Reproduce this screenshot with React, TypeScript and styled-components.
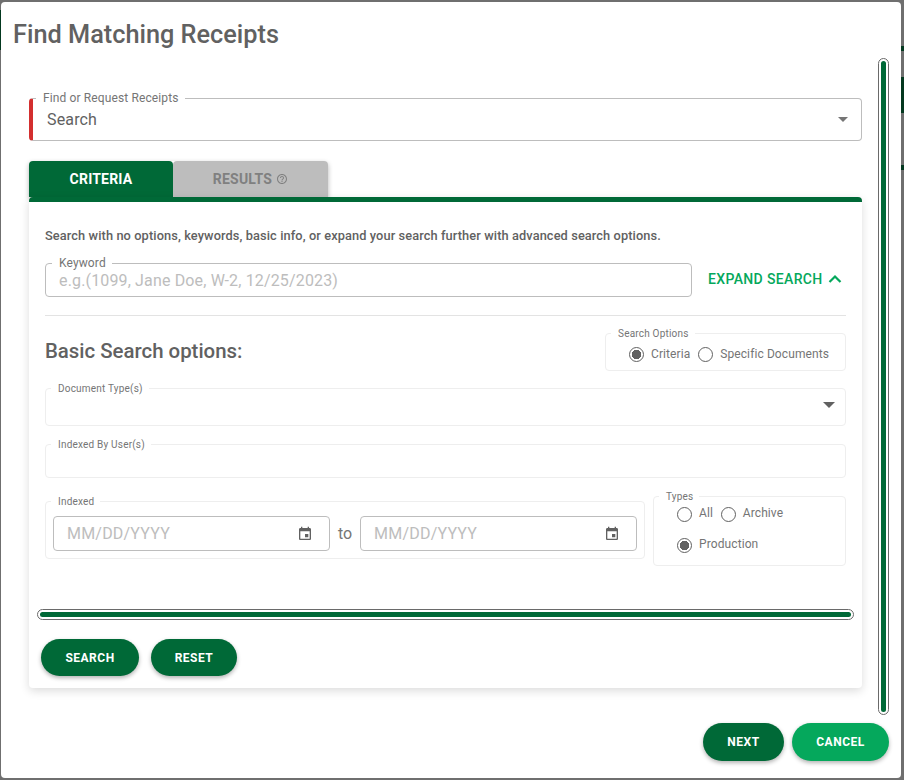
import React from 'react';
import styled, {createGlobalStyle} from 'styled-components';

const GlobalStyle = createGlobalStyle`
    html, body {
        margin: 0;
        padding: 0;
        background: #6f6f6f;
    }
    * {
        box-sizing: border-box;
    }
    body {
        font-family: Roboto, "Liberation Sans", sans-serif;
        color: #616161;
    }
`;

const CalendarIcon = () => (
    <svg width="16" height="16" viewBox="0 0 24 24" fill="#616161">
        <path d="M17 12h-5v5h5v-5zM16 1v2H8V1H6v2H5c-1.11 0-1.99.9-1.99 2L3 19c0 1.1.89 2 2 2h14c1.1 0 2-.9 2-2V5c0-1.1-.9-2-2-2h-1V1h-2zm3 18H5V8h14v11z" />
    </svg>
);

const HelpIcon = () => (
    <svg width="12" height="12" viewBox="0 0 24 24" fill="#808080">
        <path d="M11 18h2v-2h-2v2zm1-16C6.48 2 2 6.48 2 12s4.48 10 10 10 10-4.48 10-10S17.52 2 12 2zm0 18c-4.41 0-8-3.59-8-8s3.59-8 8-8 8 3.59 8 8-3.59 8-8 8zm0-14c-2.21 0-4 1.79-4 4h2c0-1.1.9-2 2-2s2 .9 2 2c0 2-3 1.75-3 5h2c0-2.25 3-2.5 3-5 0-2.21-1.79-4-4-4z" />
    </svg>
);

const App: React.FC = () => {
    return (
        <>
            <GlobalStyle />
            <Page>
                <BackdropMark $top={10} $height={40} />
                <BackdropMark $right $top={46} $height={5} />
                <BackdropMark $right $top={77} $height={36} />
                <BackdropMark $right $top={165} $height={5} />
                <Dialog>
                    <Title>Find Matching Receipts</Title>
                    <Body>
                        <Content>
                            <ReceiptField>
                                <ReceiptLegend>Find or Request Receipts</ReceiptLegend>
                                <SelectValue>Search</SelectValue>
                                <Caret />
                            </ReceiptField>
                            <Tabs>
                                <Tab $active>CRITERIA</Tab>
                                <Tab>RESULTS <HelpIcon /></Tab>
                            </Tabs>
                            <Card>
                                <Intro>Search with no options, keywords, basic info, or expand your search further with advanced search options.</Intro>
                                <KeywordRow>
                                    <KeywordField>
                                        <FieldLegend>Keyword</FieldLegend>
                                        <Placeholder>e.g.(1099, Jane Doe, W-2, 12/25/2023)</Placeholder>
                                    </KeywordField>
                                    <ExpandLink>
                                        EXPAND SEARCH
                                        <svg width="16" height="16" viewBox="0 0 16 16" fill="none" stroke="#05a85c" strokeWidth="2.2">
                                            <path d="M2.5 11l5.5-5.5 5.5 5.5" />
                                        </svg>
                                    </ExpandLink>
                                </KeywordRow>
                                <Divider />
                                <OptionsHead>
                                    <Heading>Basic Search options:</Heading>
                                    <OptionsBox>
                                        <SmallLegend>Search Options</SmallLegend>
                                        <RadioRow>
                                            <Radio $checked />
                                            <RadioLabel>Criteria</RadioLabel>
                                            <Radio />
                                            <RadioLabel>Specific Documents</RadioLabel>
                                        </RadioRow>
                                    </OptionsBox>
                                </OptionsHead>
                                <DocTypeBox>
                                    <SmallLegend>Document Type(s)</SmallLegend>
                                    <DarkCaret />
                                </DocTypeBox>
                                <UsersBox>
                                    <SmallLegend>Indexed By User(s)</SmallLegend>
                                </UsersBox>
                                <DateRow>
                                    <IndexedBox>
                                        <SmallLegend>Indexed</SmallLegend>
                                        <DateInputs>
                                            <DateField>
                                                <DatePlaceholder>MM/DD/YYYY</DatePlaceholder>
                                                <CalendarIcon />
                                            </DateField>
                                            <ToLabel>to</ToLabel>
                                            <DateField>
                                                <DatePlaceholder>MM/DD/YYYY</DatePlaceholder>
                                                <CalendarIcon />
                                            </DateField>
                                        </DateInputs>
                                    </IndexedBox>
                                    <TypesBox>
                                        <SmallLegend>Types</SmallLegend>
                                        <TypesRow>
                                            <Radio />
                                            <RadioLabel>All</RadioLabel>
                                            <Radio />
                                            <RadioLabel>Archive</RadioLabel>
                                        </TypesRow>
                                        <TypesRow>
                                            <Radio $checked />
                                            <RadioLabel>Production</RadioLabel>
                                        </TypesRow>
                                    </TypesBox>
                                </DateRow>
                                <HScroll><ScrollThumb /></HScroll>
                                <CardActions>
                                    <PillButton $width={98}>SEARCH</PillButton>
                                    <PillButton $width={86}>RESET</PillButton>
                                </CardActions>
                            </Card>
                        </Content>
                        <VScroll><ScrollThumb /></VScroll>
                    </Body>
                    <Footer>
                        <PillButton $width={81}>NEXT</PillButton>
                        <PillButton $width={97} $light>CANCEL</PillButton>
                    </Footer>
                </Dialog>
            </Page>
        </>
    );
}

const Page = styled.div`
    position: relative;
    width: 904px;
    height: 780px;
    padding: 2px 3px 2px 1px;
`;

const BackdropMark = styled.div<{$top: number; $height: number; $right?: boolean}>`
    position: absolute;
    top: ${props => props.$top}px;
    height: ${props => props.$height}px;
    ${props => props.$right ? 'right: 0; width: 3px;' : 'left: 0; width: 1px;'}
    background: #03381f;
`;

const Dialog = styled.div`
    position: relative;
    height: 776px;
    background: #fff;
    border-radius: 4px;
    display: flex;
    flex-direction: column;
`;

const Title = styled.h2`
    margin: 0;
    height: 56px;
    padding: 19px 0 0 12px;
    font-size: 25.3px;
    line-height: 28px;
    font-weight: 500;
    color: #616161;
`;

const Body = styled.div`
    display: flex;
    height: 657px;
    padding-left: 28px;
`;

const Content = styled.div`
    width: 833px;
    padding-top: 33px;
`;

const FieldLegend = styled.legend`
    margin-left: 6px;
    padding: 0 6px 0 7px;
    font-size: 12px;
    line-height: 14px;
    letter-spacing: 0.12px;
    color: #757575;
`;

const ReceiptLegend = styled(FieldLegend)`
    margin-left: 3px;
`;

const ReceiptField = styled.fieldset`
    position: relative;
    margin: 0;
    height: 50px;
    padding: 0;
    border: 1px solid #bdbdbd;
    border-left: 4px solid #d32f2f;
    border-radius: 4px;
`;

const SelectValue = styled.div`
    padding: 3px 0 0 14px;
    font-size: 16px;
    line-height: 24px;
    letter-spacing: 0.15px;
    color: #616161;
`;

const Caret = styled.span`
    position: absolute;
    right: 13px;
    top: 12px;
    border-left: 5px solid transparent;
    border-right: 5px solid transparent;
    border-top: 5px solid #757575;
`;

const DarkCaret = styled(Caret)`
    right: 10px;
    top: 8px;
    border-left-width: 6px;
    border-right-width: 6px;
    border-top: 6px solid #616161;
`;

const Tabs = styled.div`
    display: flex;
    margin-top: 20px;
    width: 299px;
    height: 36px;
    box-shadow: 0 2px 5px rgba(0, 0, 0, 0.3);
    border-radius: 4px 4px 0 0;
`;

const Tab = styled.div<{$active?: boolean}>`
    width: ${props => props.$active ? '144px' : '155px'};
    display: flex;
    align-items: center;
    justify-content: center;
    gap: 4px;
    padding-bottom: 1px;
    border-radius: 4px 4px 0 0;
    font-size: 14px;
    font-weight: 700;
    letter-spacing: 0.2px;
    background: ${props => props.$active ? '#006937' : '#bdbdbd'};
    color: ${props => props.$active ? '#fff' : '#808080'};
`;

const Card = styled.div`
    position: relative;
    height: 491px;
    padding: 26px 16px 0;
    border-top: 5px solid #006937;
    border-radius: 4px;
    background: #fff;
    box-shadow: 0 3px 10px rgba(0, 0, 0, 0.14);
`;

const Intro = styled.div`
    font-size: 12.8px;
    line-height: 16px;
    font-weight: 500;
    letter-spacing: 0.1px;
    color: #616161;
`;

const KeywordRow = styled.div`
    display: flex;
    align-items: center;
    margin-top: 12px;
`;

const KeywordField = styled.fieldset`
    margin: 0;
    width: 647px;
    height: 41px;
    padding: 0;
    border: 1px solid #bdbdbd;
    border-radius: 4px;
`;

const Placeholder = styled.div`
    padding: 1px 0 0 13px;
    font-size: 16px;
    line-height: 20px;
    letter-spacing: 0.15px;
    color: #bdbdbd;
`;

const ExpandLink = styled.div`
    display: flex;
    align-items: center;
    gap: 4px;
    margin: 4px 0 0 16px;
    font-size: 14px;
    font-weight: 500;
    letter-spacing: 0.35px;
    color: #05a85c;
`;

const Divider = styled.div`
    height: 1px;
    margin-top: 18px;
    background: #e3e3e3;
`;

const OptionsHead = styled.div`
    display: flex;
    justify-content: space-between;
    align-items: center;
    margin-top: 11px;
`;

const Heading = styled.h3`
    margin: 4px 0 0;
    font-size: 20.4px;
    line-height: 24px;
    font-weight: 500;
    color: #616161;
`;

const SmallLegend = styled.legend`
    margin-left: 5px;
    padding: 1px 6px 0 7px;
    font-size: 10px;
    line-height: 11px;
    letter-spacing: 0.2px;
    color: #757575;
`;

const ThinBox = styled.fieldset`
    position: relative;
    margin: 0;
    padding: 0;
    border: 1px solid #eeeeee;
    border-radius: 4px;
`;

const OptionsBox = styled(ThinBox)`
    width: 241px;
    height: 44px;
`;

const DocTypeBox = styled(ThinBox)`
    height: 44px;
    margin-top: 11px;
`;

const UsersBox = styled(ThinBox)`
    height: 40px;
    margin-top: 12px;
`;

const RadioRow = styled.div`
    display: flex;
    align-items: center;
    padding: 8px 0 0 23px;
`;

const Radio = styled.span<{$checked?: boolean}>`
    width: 15px;
    height: 15px;
    flex: none;
    border: 1.5px solid #616161;
    border-radius: 50%;
    background: ${props => props.$checked ? 'radial-gradient(circle, #616161 0 4.5px, transparent 5px)' : 'transparent'};
`;

const RadioLabel = styled.span`
    margin: -2px 7.8px 0 7px;
    font-size: 12px;
    line-height: 16px;
    letter-spacing: 0.1px;
    color: #757575;
`;

const DateRow = styled.div`
    display: flex;
    justify-content: space-between;
    align-items: flex-start;
    margin-top: 12px;
`;

const IndexedBox = styled(ThinBox)`
    width: 600px;
    height: 64px;
    margin-top: 5px;
`;

const DateInputs = styled.div`
    display: flex;
    align-items: center;
    padding: 9px 7px 0;
`;

const DateField = styled.div`
    flex: 1;
    height: 35px;
    display: flex;
    align-items: center;
    justify-content: space-between;
    padding: 0 16px 0 13px;
    border: 1px solid #bdbdbd;
    border-radius: 4px;
`;

const DatePlaceholder = styled.span`
    font-size: 16px;
    letter-spacing: 0.2px;
    color: #bdbdbd;
`;

const ToLabel = styled.span`
    padding: 0 8px;
    font-size: 16px;
    color: #757575;
`;

const TypesBox = styled(ThinBox)`
    width: 193px;
    height: 76px;
`;

const TypesRow = styled.div`
    display: flex;
    align-items: center;
    height: 30px;
    margin-top: -3px;
    padding-left: 23px;

    & + & {
        margin-top: 1px;
    }
`;

const HScroll = styled.div`
    position: absolute;
    left: 8px;
    right: 8px;
    top: 407px;
    height: 11px;
    padding: 2px;
    border: 1px solid #6a6a6a;
    border-radius: 6px;
    background: #fff;
    display: flex;
`;

const VScroll = styled(HScroll)`
    position: static;
    flex: none;
    width: 11px;
    height: 657px;
    margin-left: 16px;
`;

const ScrollThumb = styled.div`
    flex: 1;
    border-radius: 3px;
    background: #006937;
`;

const CardActions = styled.div`
    position: absolute;
    left: 12px;
    bottom: 12px;
    display: flex;
    gap: 12px;
`;

const PillButton = styled.button<{$width: number; $light?: boolean}>`
    width: ${props => props.$width}px;
    height: 37px;
    padding: 0;
    border: 0;
    border-radius: 19px;
    font-family: inherit;
    font-size: 12px;
    font-weight: 700;
    letter-spacing: 0.5px;
    color: #fff;
    background: ${props => props.$light ? '#05a85c' : '#006937'};
    box-shadow: 0 2px 4px rgba(0, 0, 0, 0.3);
`;

const Footer = styled.div`
    display: flex;
    justify-content: flex-end;
    gap: 8px;
    padding: 8px 12px 0 0;

    ${PillButton} {
        height: 38px;
    }
`;

export default App;
